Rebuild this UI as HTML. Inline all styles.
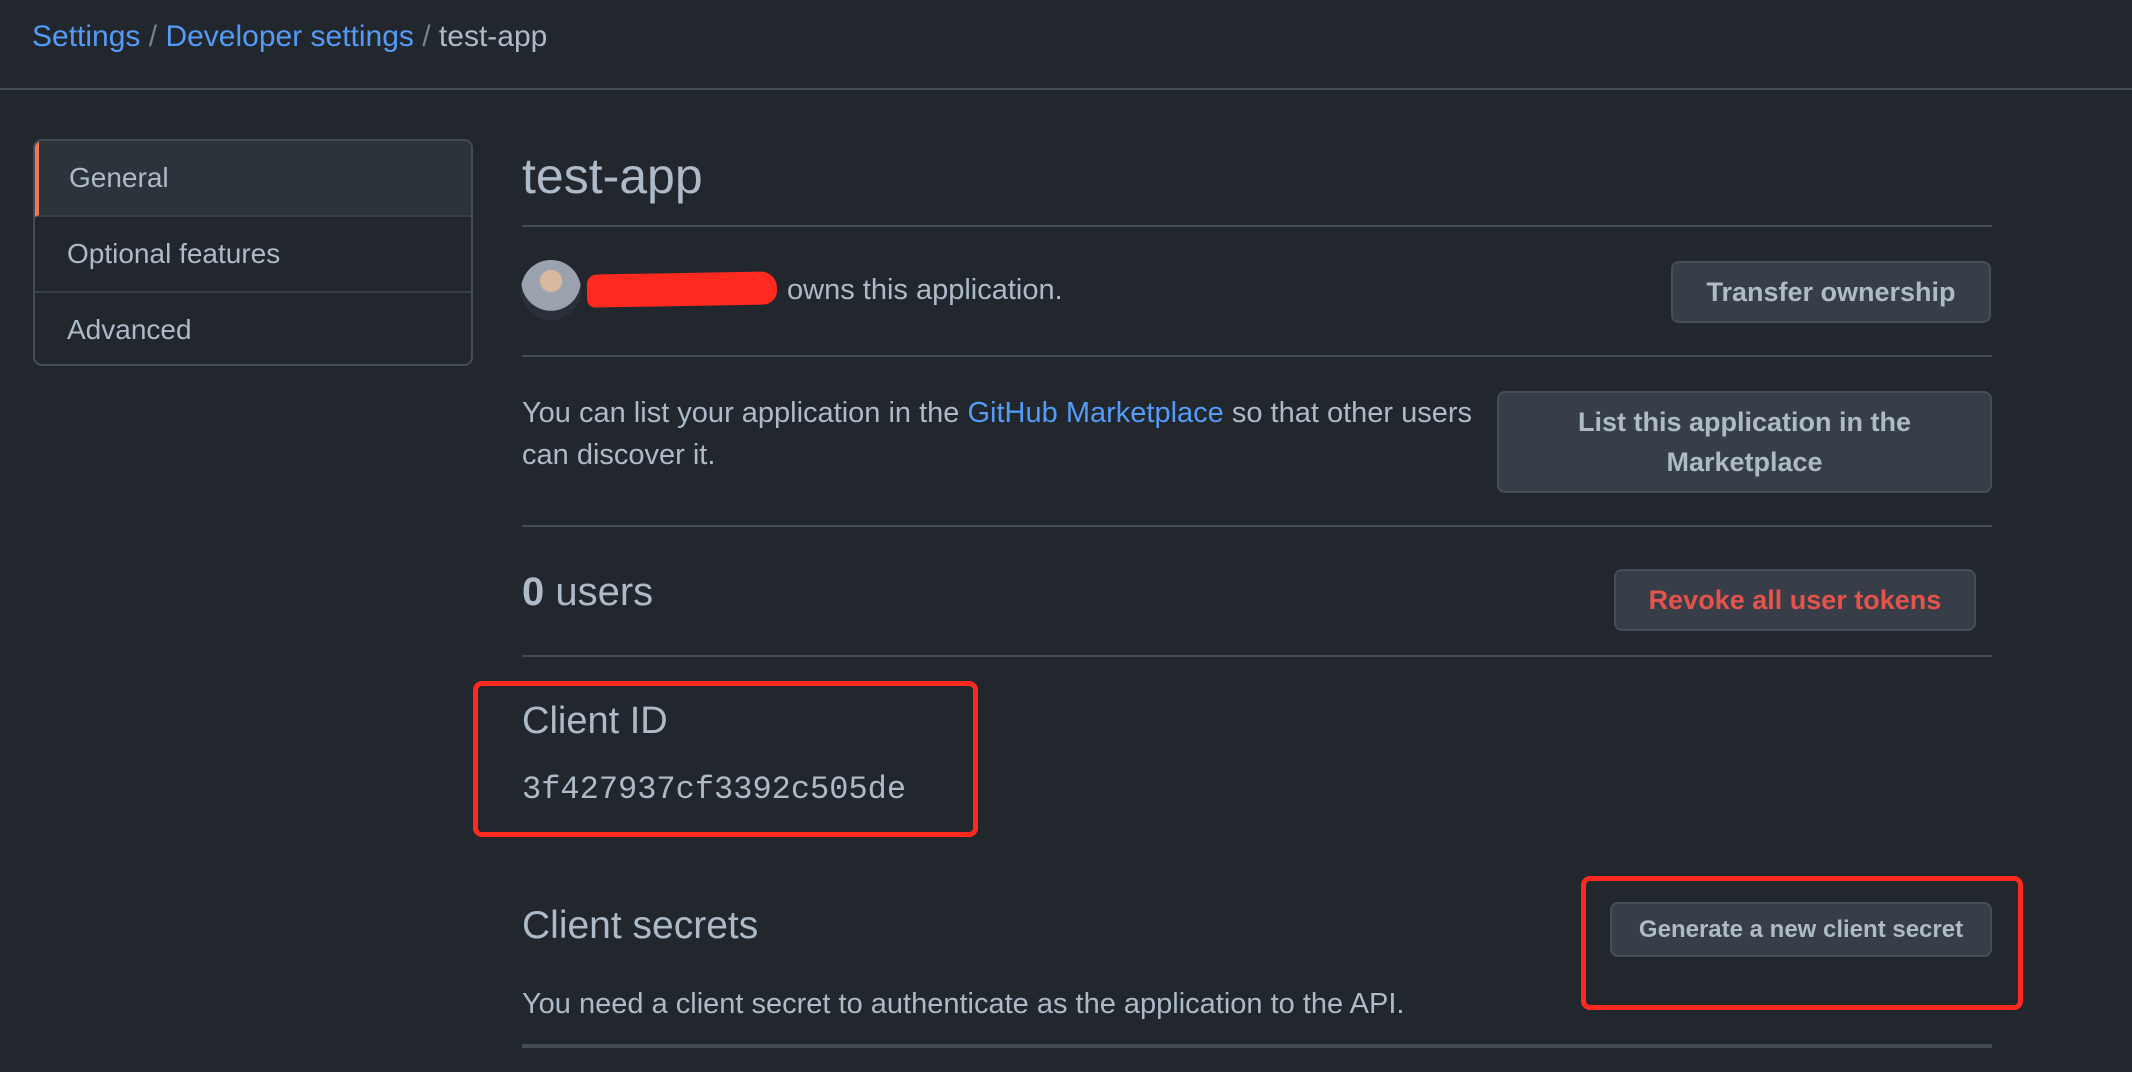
<!DOCTYPE html>
<html><head><meta charset="utf-8"><style>
*{box-sizing:border-box;margin:0;padding:0}
body{width:2132px;height:1072px;background:#22272e;color:#adbac7;font-family:"Liberation Sans",sans-serif;position:relative;overflow:hidden}
.a{position:absolute;white-space:nowrap}
.link{color:#539bf5}
.hr{position:absolute;left:522px;width:1470px;height:2px;background:#444c56}
.btn{position:absolute;background:#373e47;border:2px solid #464e59;border-radius:8px;display:flex;align-items:center;justify-content:center;text-align:center;font-weight:bold;color:#adbac7}
.side{position:absolute;left:33px;top:139px;width:440px;height:227px;border:2px solid #444c56;border-radius:9px;overflow:hidden}
.side div{height:76px;line-height:74px;padding-left:32px;font-size:28px;border-bottom:2px solid #373e47}
.box{position:absolute;border:5px solid #ff2a1f;border-radius:9px}
</style></head><body>
<div class="a" style="left:32px;top:20px;font-size:30px"><span class="link">Settings</span> <span style="color:#768390">/</span> <span class="link">Developer settings</span> <span style="color:#768390">/</span> test-app</div>
<div style="position:absolute;left:0;top:88px;width:2132px;height:2px;background:#444c56"></div>
<div class="side">
<div style="background:#2d333b;border-left:4px solid #ec775c;padding-left:30px">General</div>
<div>Optional features</div>
<div style="border-bottom:none">Advanced</div>
</div>
<div class="a" style="left:522px;top:147px;font-size:50px">test-app</div>
<div class="hr" style="top:225px"></div>
<div style="position:absolute;left:521px;top:260px;width:60px;height:60px;border-radius:50%;background:radial-gradient(circle at 50% 35%,#d9b8a0 0 22%,#9aa3ad 23% 60%,#2a2f3a 61%)"></div>
<div style="position:absolute;left:587px;top:273px;width:190px;height:33px;background:#ff2a1f;border-radius:10px 16px 14px 8px;transform:rotate(-1deg)"></div>
<div class="a" style="left:787px;top:274px;font-size:29px">owns this application.</div>
<div class="btn" style="left:1671px;top:261px;width:320px;height:62px;font-size:27px">Transfer ownership</div>
<div class="hr" style="top:355px"></div>
<div class="a" style="left:522px;top:392px;font-size:29px;line-height:42px">You can list your application in the <span class="link">GitHub Marketplace</span> so that other users<br>can discover it.</div>
<div class="btn" style="left:1497px;top:391px;width:495px;height:102px;font-size:27px;line-height:40px">List this application in the<br>Marketplace</div>
<div class="hr" style="top:525px"></div>
<div class="a" style="left:522px;top:570px;font-size:40px"><b>0</b> users</div>
<div class="btn" style="left:1614px;top:569px;width:362px;height:62px;font-size:27px;color:#e5534b">Revoke all user tokens</div>
<div class="hr" style="top:655px"></div>
<div class="box" style="left:473px;top:681px;width:505px;height:156px"></div>
<div class="a" style="left:522px;top:700px;font-size:38px">Client ID</div>
<div class="a" style="left:522px;top:771px;font-size:32px;font-family:'Liberation Mono',monospace">3f427937cf3392c505de</div>
<div class="a" style="left:522px;top:904px;font-size:39px">Client secrets</div>
<div class="box" style="left:1581px;top:876px;width:442px;height:134px"></div>
<div class="btn" style="left:1610px;top:902px;width:382px;height:55px;font-size:24px">Generate a new client secret</div>
<div class="a" style="left:522px;top:988px;font-size:29px">You need a client secret to authenticate as the application to the API.</div>
<div class="hr" style="top:1044px;height:4px"></div>
</body></html>
